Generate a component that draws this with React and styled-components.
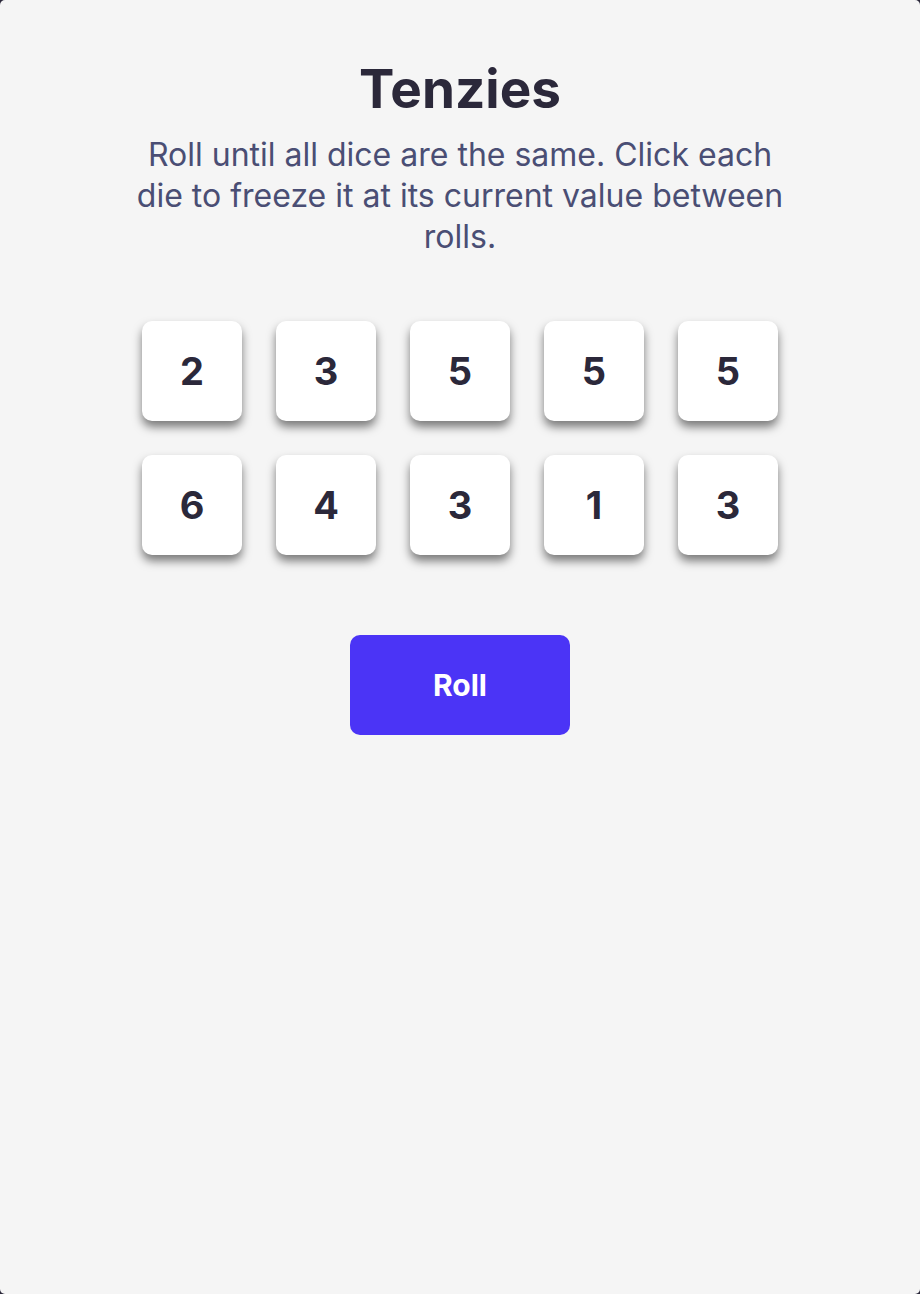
import React from 'react';
import styled, { createGlobalStyle } from 'styled-components';

const dice = [2, 3, 5, 5, 5, 6, 4, 3, 1, 3];

export default function App() {
    return (
        <>
            <GlobalStyle />
            <Main>
                <Title>Tenzies</Title>
                <Instructions>
                    Roll until all dice are the same. Click each die to freeze it at its current value between rolls.
                </Instructions>
                <DiceGrid>
                    {dice.map((value, i) => (
                        <Die key={i}>{value}</Die>
                    ))}
                </DiceGrid>
                <RollButton>Roll</RollButton>
            </Main>
        </>
    );
}

const GlobalStyle = createGlobalStyle`
    html, body {
        margin: 0;
        padding: 0;
        background-color: #2b283a;
    }
    * {
        box-sizing: border-box;
    }
`;

const Main = styled.main`
    min-height: 100vh;
    background-color: #f5f5f5;
    border-radius: 5px;
    display: flex;
    flex-direction: column;
    align-items: center;
    padding-top: 58px;
    font-family: Inter, "Noto Sans", sans-serif;
`;

const Title = styled.h1`
    margin: 0;
    font-size: 53px;
    font-weight: 700;
    line-height: 1.2;
    color: #2b283a;
`;

const Instructions = styled.p`
    margin: 12px 0 0;
    max-width: 664px;
    text-align: center;
    font-size: 32px;
    font-weight: 400;
    line-height: 41px;
    color: #4a4e74;
`;

const DiceGrid = styled.div`
    display: grid;
    grid-template-columns: repeat(5, 100px);
    gap: 34px;
    margin-top: 64px;
`;

const Die = styled.button`
    width: 100px;
    height: 100px;
    border: none;
    border-radius: 10px;
    background-color: #ffffff;
    box-shadow: 0 6px 10px rgba(0, 0, 0, 0.5);
    font-family: Inter, "Noto Sans", sans-serif;
    font-size: 38px;
    font-weight: 700;
    color: #2b283a;
    cursor: pointer;
`;

const RollButton = styled.button`
    margin-top: 80px;
    width: 220px;
    height: 100px;
    border: none;
    border-radius: 10px;
    background-color: #4b34f6;
    color: #ffffff;
    font-family: Inter, "Noto Sans", sans-serif;
    font-size: 30px;
    font-weight: 700;
    cursor: pointer;
`;
